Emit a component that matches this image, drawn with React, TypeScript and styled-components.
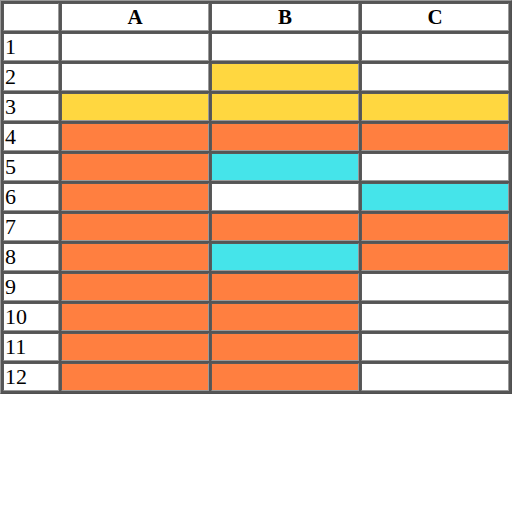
import React from 'react';
import styled, { createGlobalStyle } from 'styled-components';

type Fill = 'w' | 'y' | 'o' | 'c';

const colours: Record<Fill, string> = {
  w: '#ffffff',
  y: '#ffd740',
  o: '#ff7f40',
  c: '#45e4ea'
};

// one string per row, one letter per column A..C
const rows: Fill[][] = [
  'www', 'wyw', 'yyy', 'ooo', 'ocw', 'owc',
  'ooo', 'oco', 'oow', 'oow', 'oow', 'oow'
].map((r) => r.split('') as Fill[]);

const GlobalStyle = createGlobalStyle`
  body {
    margin: 0;
    background: #ffffff;
  }
`;

const Grid = styled.table`
  width: 512px;
  border-collapse: separate;
  border-spacing: 2px;
  border: 1px solid;
  border-color: #9a9a9a #505050 #505050 #9a9a9a;
  background: #555555;
  table-layout: fixed;
  font-family: "Liberation Serif", "Times New Roman", serif;
  font-size: 22px;
  color: #000;
`;

const HeadCell = styled.th<{ $narrow?: boolean }>`
  width: ${(p) => (p.$narrow ? '54px' : 'auto')};
  height: 26px;
  padding: 0;
  border: 1px solid;
  border-color: #5a5a5a #9a9a9a #9a9a9a #5a5a5a;
  background: #ffffff;
  font-weight: bold;
  font-size: 21px;
  text-align: center;
  line-height: 26px;
`;

const LabelCell = styled.td`
  height: 26px;
  padding: 0 0 0 1px;
  border: 1px solid;
  border-color: #5a5a5a #9a9a9a #9a9a9a #5a5a5a;
  background: #ffffff;
  text-align: left;
  line-height: 26px;
`;

const DataCell = styled.td<{ $fill: Fill }>`
  height: 26px;
  padding: 0;
  border: 1px solid;
  border-color: #5a5a5a #9a9a9a #9a9a9a #5a5a5a;
  background: ${(p) => colours[p.$fill]};
`;

export default function App (): React.ReactElement {
  return (
    <>
      <GlobalStyle />
      <Grid>
        <thead>
          <tr>
            <HeadCell $narrow />
            <HeadCell>A</HeadCell>
            <HeadCell>B</HeadCell>
            <HeadCell>C</HeadCell>
          </tr>
        </thead>
        <tbody>
          {rows.map((row, i) => (
            <tr key={i}>
              <LabelCell>{i + 1}</LabelCell>
              {row.map((fill, j) => (
                <DataCell key={j} $fill={fill} />
              ))}
            </tr>
          ))}
        </tbody>
      </Grid>
    </>
  );
}
